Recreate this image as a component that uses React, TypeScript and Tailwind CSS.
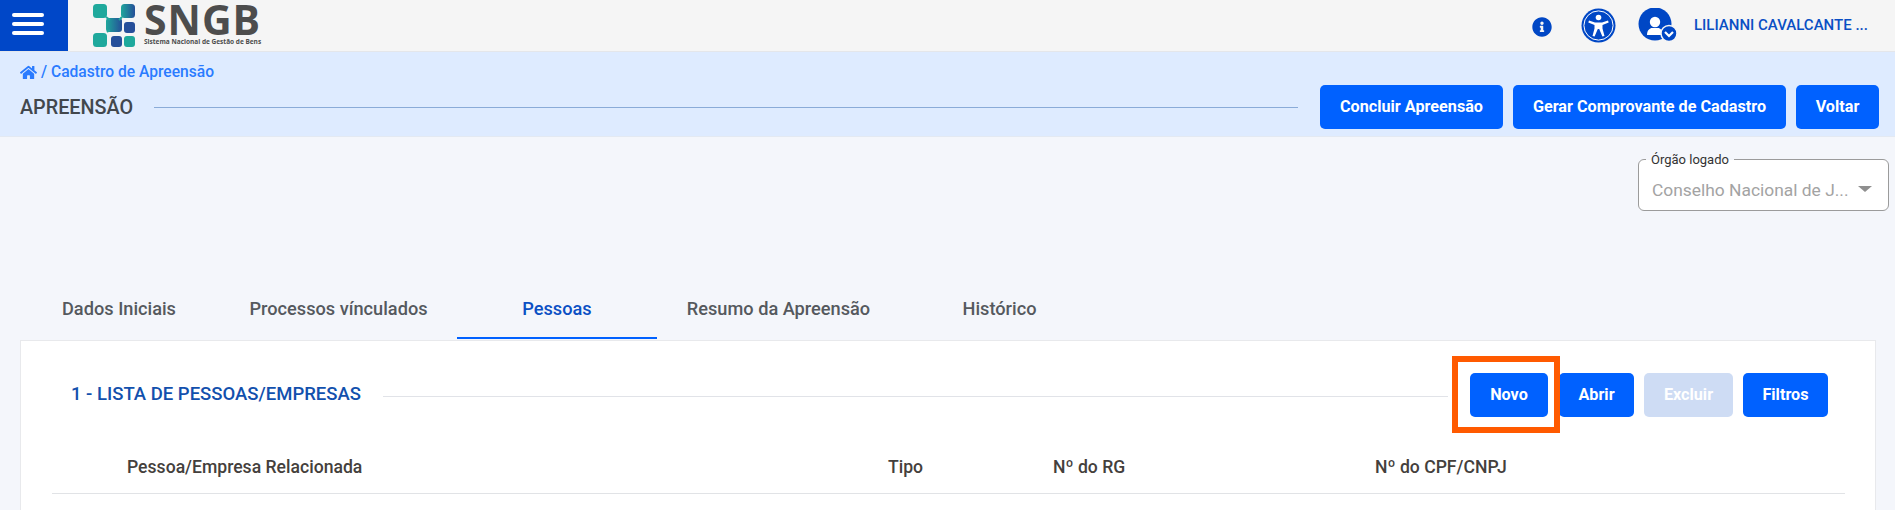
import React from "react";
import { FaHome, FaInfoCircle } from "react-icons/fa";

function Btn({ children, className = "" }: { children: React.ReactNode; className?: string }) {
  return (
    <button className={`h-11 rounded-[5px] text-[16.2px] font-bold text-white flex items-center justify-center whitespace-nowrap ${className}`}>
      {children}
    </button>
  );
}

function Logo() {
  return (
    <div className="ml-[24px] flex items-center">
      <svg width="44" height="46" viewBox="0 0 44 46" className="mt-[-1px]">
        <defs>
          <linearGradient id="g1" x1="0" y1="0" x2="1" y2="0">
            <stop offset="0" stopColor="#1fa79c" />
            <stop offset="1" stopColor="#254f98" />
          </linearGradient>
        </defs>
        <rect x="1" y="2" width="14" height="14" rx="3.5" fill="#1fa99c" />
        <rect x="29" y="2" width="14" height="14" rx="3.5" fill="url(#g1)" />
        <rect x="14" y="16" width="16" height="14" rx="3" fill="url(#g1)" />
        <rect x="32" y="20" width="11" height="11" rx="3" fill="#264f9a" />
        <rect x="1" y="31" width="14" height="14" rx="3.5" fill="#1fa99c" />
        <rect x="19" y="34" width="11" height="11" rx="3" fill="#264f9a" />
        <rect x="32" y="34" width="11" height="11" rx="3" fill="#1fa99c" />
        <path d="M14 15 L18 18 M30 15 L27 18 M15 30 L18 28" stroke="#1fa99c" strokeWidth="2" />
      </svg>
      <div className="ml-[8px] flex h-[51px] flex-col justify-start pt-[1px] font-['Open_Sans',sans-serif] text-[#4d4d4d]">
        <span className="h-[37px] text-[41px] font-bold leading-[37px] tracking-[1px]">SNGB</span>
        <span className="text-[6.5px] font-bold leading-[8px] whitespace-nowrap">Sistema Nacional de Gestão de Bens</span>
      </div>
    </div>
  );
}

function AccessIcon() {
  return (
    <svg width="35" height="35" viewBox="0 0 35 35">
      <circle cx="17.5" cy="17.5" r="17" fill="#0047c5" />
      <circle cx="17.5" cy="17.5" r="14.6" fill="#0047c5" stroke="#fff" strokeWidth="1" />
      <circle cx="17.5" cy="9.5" r="2.8" fill="#fff" />
      <path d="M8 12.5 L14 14.5 H21 L27 12.5 L27.7 14.5 L21.5 17 V20.5 L23.5 28 L21.4 28.6 L18.2 21 H16.8 L13.6 28.6 L11.5 28 L13.5 20.5 V17 L7.3 14.5 Z" fill="#fff" />
    </svg>
  );
}

function UserIcon() {
  return (
    <svg width="42" height="36" viewBox="0 0 42 36">
      <circle cx="17" cy="16" r="16.5" fill="#0047c5" />
      <circle cx="17" cy="14" r="5.2" fill="#fff" />
      <path d="M9 27 C9 22 12 20 14 20 H20 C22 20 25 22 25 27 Z" fill="#fff" />
      <circle cx="31" cy="25.5" r="8" fill="#0047c5" stroke="#f5f5f5" strokeWidth="1.5" />
      <path d="M27 24 L31 28 L35 24" fill="none" stroke="#fff" strokeWidth="2.2" />
    </svg>
  );
}

export default function App() {
  return (
    <div className="h-[510px] w-[1895px] overflow-hidden bg-[#f4f6fb] font-['Roboto',sans-serif]">
      <header className="flex h-[52px] items-start bg-[#f5f5f5] border-b border-[#e4e6ea]">
        <div className="flex h-[51px] w-[68px] flex-col items-start justify-center gap-[5px] bg-[#0047c8] pb-[4px] pl-[12px]">
          <span className="h-[4px] w-[32px] rounded-sm bg-white" />
          <span className="h-[4px] w-[32px] rounded-sm bg-white" />
          <span className="h-[4px] w-[32px] rounded-sm bg-white" />
        </div>
        <Logo />
        <div className="ml-auto flex h-[51px] items-center pr-[14px]">
          <FaInfoCircle className="mt-[3px] text-[20px] text-[#0047c5]" />
          <div className="ml-[29px]"><AccessIcon /></div>
          <div className="ml-[22px]"><UserIcon /></div>
          <span className="ml-[14px] w-[187px] text-[15px] font-medium text-[#0a4fc4] whitespace-nowrap">LILIANNI CAVALCANTE ...</span>
        </div>
      </header>

      <section className="flex h-[85px] border-b border-[#e3e9f2] bg-[#deebff] pl-[20px] pr-[16px]">
        <div className="flex-1 pt-[11px]">
          <div className="flex items-center gap-[4px] text-[15.6px] font-medium leading-[18px] text-[#2a7bff]">
            <FaHome className="text-[17px]" />
            <span>/ Cadastro de Apreensão</span>
          </div>
          <div className="mt-[15px] flex items-center">
            <span className="text-[19.8px] font-medium leading-[24px] text-[#42474d]">APREENSÃO</span>
            <span className="mb-[2px] ml-[21px] h-px flex-1 bg-[#8aabd8]" />
          </div>
        </div>
        <div className="ml-[22px] flex items-start gap-[10px] pt-[33px]">
          <Btn className="w-[183px] bg-[#0061ff]">Concluir Apreensão</Btn>
          <Btn className="w-[273px] bg-[#0061ff]">Gerar Comprovante de Cadastro</Btn>
          <Btn className="w-[83px] bg-[#0061ff]">Voltar</Btn>
        </div>
      </section>

      <div className="flex justify-end pr-[6px] pt-[22px]">
        <div className="relative flex h-[52px] w-[251px] items-center justify-between rounded-[6px] border border-[#9b9b9b] bg-white pl-[13px] pr-[16px] pt-[10px]">
          <span className="absolute left-[7px] top-[-8px] bg-gradient-to-b from-[#f4f6fb] from-50% to-white to-50% px-[5px] text-[13px] leading-[16px] text-[#333]">Órgão logado</span>
          <span className="text-[17.4px] whitespace-nowrap text-[#a3a3a3]">Conselho Nacional de J...</span>
          <span className="mb-[2px] h-0 w-0 border-x-[7px] border-t-[6px] border-x-transparent border-t-[#8f8f8f]" />
        </div>
      </div>

      <nav className="ml-[32px] mt-[78px] flex h-[50px] items-start text-[18.2px] font-medium text-[#55595e]">
        <div className="flex h-[48px] w-[174px] items-center pb-[9px] pl-[30px] whitespace-nowrap">Dados Iniciais</div>
        <div className="ml-[14px] flex h-[48px] w-[237px] items-center justify-center pb-[9px] whitespace-nowrap">Processos vínculados</div>
        <div className="flex h-[50px] w-[200px] items-center justify-center border-b-2 border-[#0061ff] pb-[9px] text-[#0a4fc4]">Pessoas</div>
        <div className="flex h-[48px] w-[243px] items-center justify-center pb-[9px] whitespace-nowrap">Resumo da Apreensão</div>
        <div className="ml-[32px] flex h-[48px] w-[135px] items-center justify-center pb-[9px] whitespace-nowrap">Histórico</div>
      </nav>

      <main className="relative ml-[20px] mt-[1px] h-[170px] w-[1856px] border border-b-0 border-[#e8e9ec] bg-white">
        <div className="flex h-[76px] items-center pl-[50px] pt-[32px]">
          <span className="mb-[1px] w-[312px] text-[18.5px] font-medium text-[#1250ad] whitespace-nowrap">1 - LISTA DE PESSOAS/EMPRESAS</span>
          <span className="mt-[2px] h-px w-[1065px] bg-[#e1e3e8]" />
          <div className="ml-[22px] flex">
            <Btn className="mr-[11px] w-[78px] bg-[#0061ff]">Novo</Btn>
            <Btn className="mr-[10px] w-[75px] bg-[#0061ff]">Abrir</Btn>
            <Btn className="mr-[10px] w-[89px] bg-[#cedcf4]">Excluir</Btn>
            <Btn className="w-[85px] bg-[#0061ff]">Filtros</Btn>
          </div>
        </div>
        <div className="absolute left-[1431px] top-[15px] h-[77px] w-[108px] border-[6px] border-[#ff5a00]" />
        <div className="ml-[31px] mt-[27px] flex h-[50px] w-[1793px] items-center border-b border-[#e1e3e6] pb-[2px] text-[17.6px] font-medium text-[#44403c]">
          <span className="ml-[75px] w-[761px] whitespace-nowrap">Pessoa/Empresa Relacionada</span>
          <span className="w-[165px]">Tipo</span>
          <span className="w-[322px]">Nº do RG</span>
          <span>Nº do CPF/CNPJ</span>
        </div>
      </main>
    </div>
  );
}
